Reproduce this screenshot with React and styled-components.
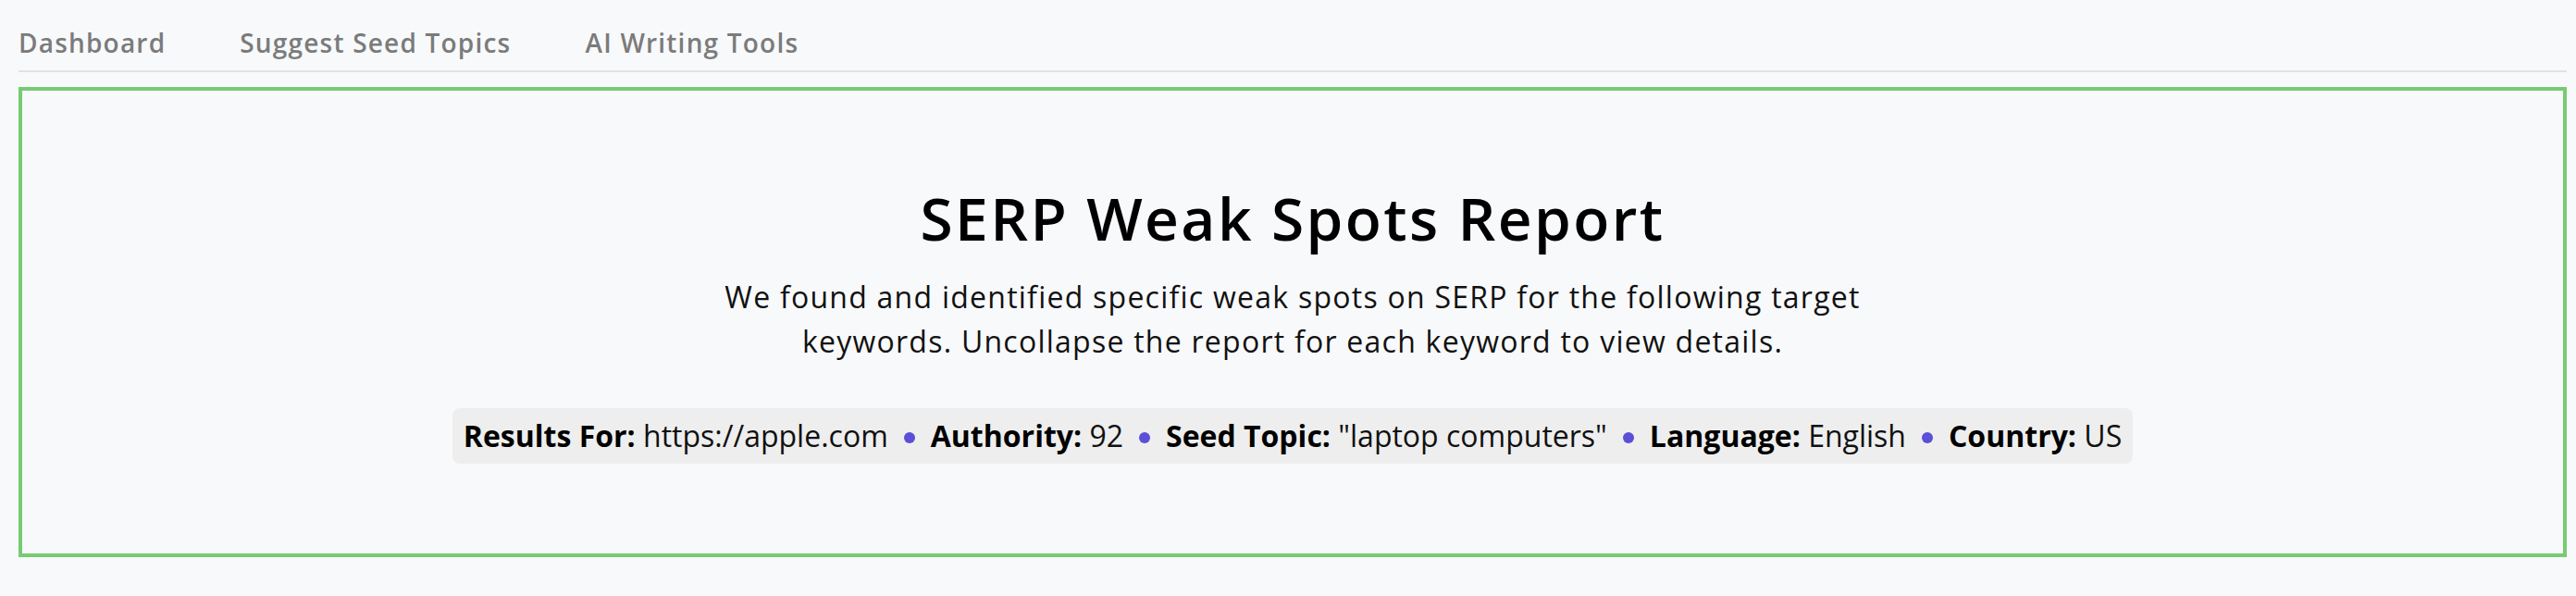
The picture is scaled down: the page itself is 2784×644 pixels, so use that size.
import React from "react";
import styled, { createGlobalStyle } from "styled-components";

const GlobalStyle = createGlobalStyle`
  body {
    margin: 0;
    background: #f8f9fb;
    font-family: "Open Sans", "Noto Sans", sans-serif;
  }
`;

const Page = styled.div`
  padding: 0 10px 0 20px;
`;

const NavBar = styled.nav`
  display: flex;
  gap: 80px;
  height: 78px;
  align-items: center;
  padding-top: 16px;
  box-sizing: border-box;
  border-bottom: 2px solid #e1e2e5;
`;

const NavLink = styled.a`
  color: #7b7b7b;
  font-size: 28px;
  font-weight: 600;
  letter-spacing: 1.2px;
  text-decoration: none;
`;

const ReportBox = styled.section`
  margin-top: 16px;
  border: 4px solid #77cb72;
  height: 508px;
  box-sizing: border-box;
  display: flex;
  flex-direction: column;
  align-items: center;
  padding-top: 100px;
`;

const Title = styled.h1`
  margin: 0;
  font-size: 64px;
  font-weight: 600;
  letter-spacing: 2.4px;
  color: #000;
  line-height: 1.2;
`;

const Intro = styled.p`
  margin: 22px 0 0;
  width: 1300px;
  text-align: center;
  font-size: 32px;
  line-height: 48px;
  letter-spacing: 1.25px;
  color: #111;
`;

const MetaBar = styled.div`
  margin-top: 48px;
  display: flex;
  align-items: center;
  gap: 17px;
  height: 60px;
  padding: 0 12px;
  background: #eeeeee;
  border-radius: 8px;
  font-size: 32px;
  color: #111;
`;

const MetaItem = styled.span`
  white-space: nowrap;
  b {
    font-weight: 700;
    color: #000;
  }
`;

const Dot = styled.span`
  width: 12px;
  height: 12px;
  border-radius: 50%;
  background: #5a4fd6;
  margin-top: 4px;
`;

const meta = [
  ["Results For:", "https://apple.com"],
  ["Authority:", "92"],
  ["Seed Topic:", '"laptop computers"'],
  ["Language:", "English"],
  ["Country:", "US"],
];

export default function App() {
  return (
    <Page>
      <GlobalStyle />
      <NavBar>
        <NavLink href="#">Dashboard</NavLink>
        <NavLink href="#">Suggest Seed Topics</NavLink>
        <NavLink href="#">AI Writing Tools</NavLink>
      </NavBar>
      <ReportBox>
        <Title>SERP Weak Spots Report</Title>
        <Intro>
          We found and identified specific weak spots on SERP for the following target
          keywords. Uncollapse the report for each keyword to view details.
        </Intro>
        <MetaBar>
          {meta.map(([label, value], i) => (
            <React.Fragment key={label}>
              {i > 0 && <Dot />}
              <MetaItem>
                <b>{label}</b> {value}
              </MetaItem>
            </React.Fragment>
          ))}
        </MetaBar>
      </ReportBox>
    </Page>
  );
}
